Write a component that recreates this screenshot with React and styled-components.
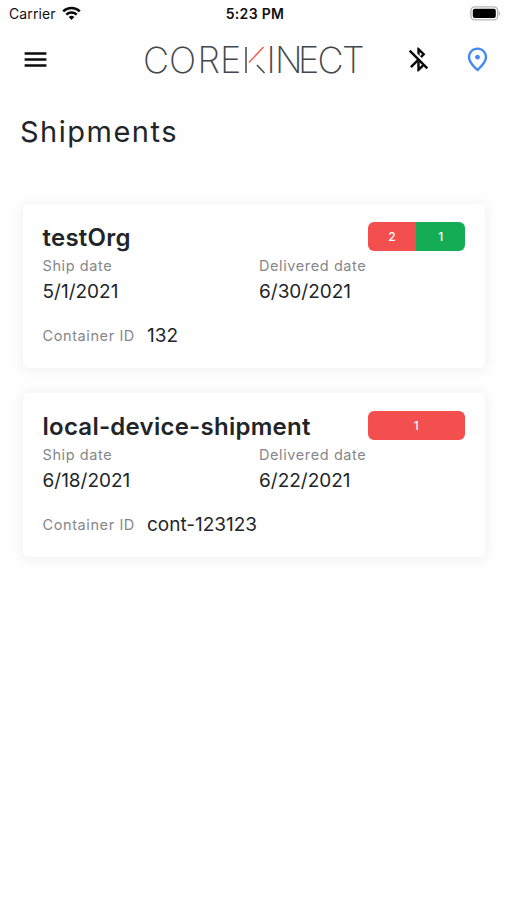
import React from 'react';
import styled, { createGlobalStyle } from "styled-components";
import { MdMenu, MdBluetoothDisabled, MdOutlinePlace } from "react-icons/md";

const GlobalStyle = createGlobalStyle`
  * {
    box-sizing: border-box;
  }
  body {
    margin: 0;
    background: #fefefe;
    color: #212529;
    font-family: Inter, "Liberation Sans", sans-serif;
  }
`;

const Screen = styled.div`
  min-height: 900px;
  overflow: hidden;
`;

const StatusBar = styled.div`
  display: grid;
  grid-template-columns: 1fr auto 1fr;
  align-items: center;
  height: 27px;
  padding: 0 6px 0 9px;
  color: #111;
  font-size: 14px;
`;

const Carrier = styled.div`
  display: flex;
  align-items: center;
  gap: 6px;
  letter-spacing: 0.1px;
`;

const Clock = styled.div`
  font-weight: 600;
  letter-spacing: 0.3px;
`;

const BatteryIcon = styled.svg`
  justify-self: end;
`;

const Header = styled.header`
  display: flex;
  align-items: center;
  height: 65px;
  padding: 0 15px 0 20.5px;
`;

const IconButton = styled.button`
  display: flex;
  padding: 0;
  border: 0;
  background: none;
  color: ${props => props.$color || "#0b0b0b"};
  font-size: 29px;
`;

const Logo = styled.svg`
  margin: 0 auto 0 90.5px;
  font-family: Inter, sans-serif;
  font-weight: 250;
  font-size: 36px;
  fill: #43474b;
`;

const Actions = styled.div`
  display: flex;
  gap: 30px;
`;

const Title = styled.h1`
  margin: 22px 0 0 20px;
  font-size: 29px;
  line-height: 35px;
  font-weight: 400;
  letter-spacing: 1.5px;
`;

const List = styled.main`
  display: grid;
  gap: 25px;
  margin: 55px 22px 0 23px;
`;

const Card = styled.article`
  height: 164px;
  padding: 18px 20px 0 19.5px;
  border-radius: 5px;
  background: #fff;
  box-shadow: 0 1px 12px 2px rgba(0, 0, 0, 0.05);
`;

const CardTop = styled.div`
  display: flex;
  justify-content: space-between;
  height: 34px;
`;

const Name = styled.h2`
  margin: 0;
  font-size: 24px;
  line-height: 31px;
  font-weight: 600;
  letter-spacing: 0.25px;
`;

const Badge = styled.div`
  display: flex;
  width: 97.5px;
  height: 29px;
  overflow: hidden;
  border-radius: 6px;
`;

const Count = styled.span`
  flex: 1;
  color: #fff;
  background: ${props => props.$ok ? "#14ad55" : "#f44f4f"};
  font-size: 12px;
  line-height: 30px;
  font-weight: 500;
  text-align: center;
`;

const Dates = styled.div`
  display: grid;
  grid-template-columns: 216.5px 1fr;
`;

const Label = styled.div`
  color: #85878a;
  font-size: 14.5px;
  line-height: 20px;
  letter-spacing: 0.6px;
`;

const Value = styled.div`
  font-size: 19px;
  line-height: 31px;
`;

const Container = styled.div`
  display: flex;
  align-items: center;
  gap: 12px;
  margin-top: 13px;

  ${Label} {
    padding-top: 1px;
  }
`;

const shipments = [
  {
    name: "testOrg",
    shipped: "5/1/2021",
    delivered: "6/30/2021",
    container: "132",
    alerts: 2,
    ok: 1,
  },
  {
    name: "local-device-shipment",
    shipped: "6/18/2021",
    delivered: "6/22/2021",
    container: "cont-123123",
    alerts: 1,
  },
];

const Wifi = () => (
  <svg width="19" height="15" viewBox="0 0 19 15" fill="none" stroke="#0b0b0b" strokeWidth="2.5">
    <path d="M1.2 5.3a12 12 0 0 1 16.6 0" />
    <path d="M4.3 8.6a7.6 7.6 0 0 1 10.4 0" />
    <path d="M6.7 11a4.3 4.3 0 0 1 5.6 0L9.5 14z" fill="#0b0b0b" stroke="none" />
  </svg>
);

const Battery = () => (
  <BatteryIcon width="31" height="15" viewBox="0 0 31 15">
    <rect x="0.9" y="0.9" width="26.8" height="13" rx="4" fill="#fff" stroke="#b5b5b5" strokeWidth="1.4" />
    <rect x="2.8" y="2.8" width="23" height="9.2" rx="2" fill="#000" />
    <path d="M29 5.2q2 2.2 0 4.4z" fill="#a5a5a5" />
  </BatteryIcon>
);

// origin of the drawing is 140px from the left edge of the screen
const CoreKinect = () => (
  <Logo width="228" height="50" viewBox="0 0 228 50">
    <text y="38" x="3 29 57.5 80">CORE</text>
    <path d="M106 12v26M117 30l7.5 8" fill="none" stroke="#43474b" strokeWidth="1.5" />
    <path d="M109 27.5L123.5 12" fill="none" stroke="#f0604f" strokeWidth="1.5" />
    <text y="38" x="126.5 135 158 177.5 202">INECT</text>
  </Logo>
);

const Shipment = ({ item }) => (
  <Card>
    <CardTop>
      <Name>{item.name}</Name>
      <Badge>
        <Count>{item.alerts}</Count>
        {item.ok && <Count $ok>{item.ok}</Count>}
      </Badge>
    </CardTop>
    <Dates>
      <div>
        <Label>Ship date</Label>
        <Value>{item.shipped}</Value>
      </div>
      <div>
        <Label>Delivered date</Label>
        <Value>{item.delivered}</Value>
      </div>
    </Dates>
    <Container>
      <Label>Container ID</Label>
      <Value>{item.container}</Value>
    </Container>
  </Card>
);

const App = () => {
  return (
    <Screen>
      <GlobalStyle />
      <StatusBar>
        <Carrier>
          Carrier
          <Wifi />
        </Carrier>
        <Clock>5:23 PM</Clock>
        <Battery />
      </StatusBar>
      <Header>
        <IconButton><MdMenu /></IconButton>
        <CoreKinect />
        <Actions>
          <IconButton><MdBluetoothDisabled /></IconButton>
          <IconButton $color="#4289f5"><MdOutlinePlace /></IconButton>
        </Actions>
      </Header>
      <Title>Shipments</Title>
      <List>
        {shipments.map(item => <Shipment key={item.name} item={item} />)}
      </List>
    </Screen>
  );
}

export default App;
